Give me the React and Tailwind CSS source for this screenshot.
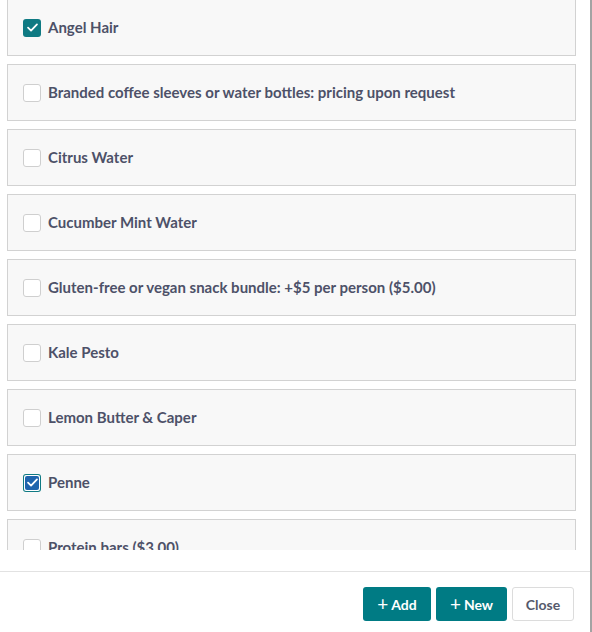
import React from "react";

const items = [
  { label: "Angel Hair", state: "checked" },
  { label: "Branded coffee sleeves or water bottles: pricing upon request" },
  { label: "Citrus Water" },
  { label: "Cucumber Mint Water" },
  { label: "Gluten-free or vegan snack bundle: +$5 per person ($5.00)" },
  { label: "Kale Pesto" },
  { label: "Lemon Butter & Caper" },
  { label: "Penne", state: "focus" },
  { label: "Protein bars ($3.00)" },
];

function Check({ color = "white" }) {
  return (
    <svg viewBox="0 0 16 16" className="w-[13px] h-[13px]" fill="none">
      <path d="M2.5 8.2 L6.2 11.8 L13.5 4.2" stroke={color} strokeWidth="2.2" strokeLinecap="round" strokeLinejoin="round" />
    </svg>
  );
}

function Box({ state }) {
  if (state === "checked") {
    return (
      <div className="w-[18px] h-[18px] rounded-[3px] bg-[#0f7a83] flex items-center justify-center shrink-0">
        <Check />
      </div>
    );
  }
  if (state === "focus") {
    return (
      <div className="w-[18px] h-[18px] rounded-[3px] bg-[#0f7a83] p-[1px] shrink-0">
        <div className="w-full h-full rounded-[2px] bg-white p-[1px]">
          <div className="w-full h-full rounded-[2px] bg-[#1f64ad] flex items-center justify-center">
            <Check />
          </div>
        </div>
      </div>
    );
  }
  return <div className="w-[18px] h-[18px] rounded-[3px] border border-[#cfcfcf] bg-white shrink-0" />;
}

export default function App() {
  return (
    <div className="w-[592px] h-[632px] flex bg-white overflow-hidden" style={{ fontFamily: "Lato, 'Open Sans', sans-serif" }}>
      <div className="w-[590px] h-full flex flex-col">
        <div className="h-[550px] overflow-hidden pl-[7px] pr-[14px]">
          <div className="-mt-[1px] flex flex-col gap-[8px]">
            {items.map((it) => (
              <div key={it.label} className="h-[57px] shrink-0 border border-[#d2d2d2] bg-[#f8f8f8] flex items-center pl-[15px] gap-[7px]">
                <Box state={it.state} />
                <span className="text-[15px] font-bold text-[#4d5168] leading-none">{it.label}</span>
              </div>
            ))}
          </div>
        </div>
        <div className="h-[21px]" />
        <div className="border-t border-[#e2e2e2] flex justify-end items-start pt-[15px] pr-[16px] gap-[5px]">
          <button className="h-[34px] w-[68px] rounded-[3px] bg-[#007b84] text-white text-[14px] font-bold flex items-center justify-center gap-[3px]">
            <span className="text-[19px] font-normal leading-none -mt-[2px]">+</span>Add
          </button>
          <button className="h-[34px] w-[71px] rounded-[3px] bg-[#007b84] text-white text-[14px] font-bold flex items-center justify-center gap-[3px]">
            <span className="text-[19px] font-normal leading-none -mt-[2px]">+</span>New
          </button>
          <button className="h-[34px] w-[62px] rounded-[3px] bg-white border border-[#dcdcdc] text-[#555a6b] text-[14px] font-bold flex items-center justify-center">
            Close
          </button>
        </div>
      </div>
      <div className="w-[2px] h-full bg-[#a3a3a3]" />
    </div>
  );
}
